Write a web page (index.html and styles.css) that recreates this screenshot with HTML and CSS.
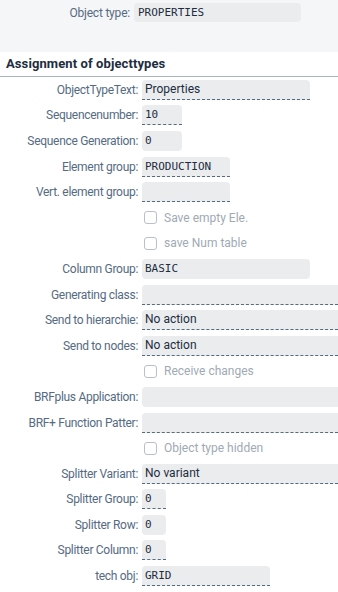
FILE: index.html
```html
<!DOCTYPE html>
<html lang="en">
<head>
    <meta charset="UTF-8">
    <meta name="viewport" content="width=device-width, initial-scale=1.0">
    <title>Object type</title>
    <link rel="stylesheet" href="styles.css">
</head>
<body>
    <div class="page-head">
        <div class="head-row">
            <span class="head-label">Object type:</span>
            <span class="head-field mono">PROPERTIES</span>
        </div>
    </div>

    <div class="section">
        <h2 class="section-title">Assignment of objecttypes</h2>

        <div class="form">
            <div class="row">
                <label class="lbl">ObjectTypeText:</label>
                <span class="field w-l">Properties</span>
            </div>
            <div class="row">
                <label class="lbl">Sequencenumber:</label>
                <span class="field w-s mono">10</span>
            </div>
            <div class="row">
                <label class="lbl">Sequence Generation:</label>
                <span class="field w-s mono plain">0</span>
            </div>
            <div class="row">
                <label class="lbl">Element group:</label>
                <span class="field w-m mono">PRODUCTION</span>
            </div>
            <div class="row">
                <label class="lbl">Vert. element group:</label>
                <span class="field w-m"></span>
            </div>
            <div class="row">
                <span class="lbl"></span>
                <span class="check"><span class="box"></span>Save empty Ele.</span>
            </div>
            <div class="row">
                <span class="lbl"></span>
                <span class="check"><span class="box"></span>save Num table</span>
            </div>
            <div class="row">
                <label class="lbl">Column Group:</label>
                <span class="field w-l mono plain">BASIC</span>
            </div>
            <div class="row">
                <label class="lbl">Generating class:</label>
                <span class="field w-x"></span>
            </div>
            <div class="row">
                <label class="lbl">Send to hierarchie:</label>
                <span class="field w-x">No action</span>
            </div>
            <div class="row">
                <label class="lbl">Send to nodes:</label>
                <span class="field w-x">No action</span>
            </div>
            <div class="row">
                <span class="lbl"></span>
                <span class="check"><span class="box"></span>Receive changes</span>
            </div>
            <div class="row">
                <label class="lbl">BRFplus Application:</label>
                <span class="field w-x plain"></span>
            </div>
            <div class="row">
                <label class="lbl">BRF+ Function Patter:</label>
                <span class="field w-x"></span>
            </div>
            <div class="row">
                <span class="lbl"></span>
                <span class="check"><span class="box"></span>Object type hidden</span>
            </div>
            <div class="row">
                <label class="lbl">Splitter Variant:</label>
                <span class="field w-x">No variant</span>
            </div>
            <div class="row">
                <label class="lbl">Splitter Group:</label>
                <span class="field w-xs mono">0</span>
            </div>
            <div class="row">
                <label class="lbl">Splitter Row:</label>
                <span class="field w-xs mono plain">0</span>
            </div>
            <div class="row">
                <label class="lbl">Splitter Column:</label>
                <span class="field w-xs mono">0</span>
            </div>
            <div class="row">
                <label class="lbl">tech obj:</label>
                <span class="field w-t mono">GRID</span>
            </div>
        </div>
    </div>
</body>
</html>
```

FILE: styles.css
```css
body {
    margin: 0;
    padding: 0;
    font-family: Roboto, Arial, sans-serif;
    font-size: 12px;
    color: #1d2d3e;
    background-color: #fff;
    overflow: hidden;
}

.mono {
    font-family: "DejaVu Sans Mono", "Liberation Mono", monospace;
    font-size: 11px;
    letter-spacing: 0;
}

.page-head {
    background-color: #f5f6f7;
    height: 52px;
    padding-top: 3px;
    box-sizing: border-box;
}

.head-row {
    display: flex;
    align-items: center;
}

.head-label {
    width: 130px;
    text-align: right;
    color: #556b82;
    margin-right: 4px;
    letter-spacing: -0.2px;
}

.head-field {
    width: 167px;
    height: 19px;
    line-height: 19px;
    background-color: #eaecee;
    border-radius: 4px;
    padding-left: 4px;
    box-sizing: border-box;
}

.section-title {
    margin: 0;
    padding: 0 6px;
    height: 24px;
    line-height: 23px;
    font-size: 13px;
    font-weight: bold;
    letter-spacing: 0.1px;
    border-bottom: 1px solid #a9b4be;
}

.row {
    display: flex;
    align-items: center;
    height: 25.6px;
}

.lbl {
    flex: none;
    width: 138px;
    text-align: right;
    color: #556b82;
    margin-right: 4px;
    white-space: nowrap;
    letter-spacing: -0.3px;
}

.field {
    flex: none;
    height: 20px;
    line-height: 19px;
    background-color: #eaecee;
    border-radius: 4px 4px 0 0;
    border-bottom: 1px dashed #556b82;
    padding-left: 3px;
    box-sizing: border-box;
    white-space: nowrap;
}

.field.plain {
    border-bottom-color: transparent;
    border-radius: 4px;
}

.w-xs { width: 24px; }
.w-s { width: 40px; }
.w-m { width: 88px; }
.w-t { width: 128px; }
.w-l { width: 168px; }

.field.w-x {
    flex: 1;
    border-radius: 4px 0 0 0;
}

.field.w-x.plain {
    border-radius: 4px 0 0 4px;
}

.check {
    display: flex;
    align-items: center;
    color: #a0aab4;
}

.box {
    width: 13px;
    height: 13px;
    border: 1px solid #b8c0c8;
    border-radius: 3px;
    box-sizing: border-box;
    margin: 0 7px 0 2px;
    background-color: #fff;
}
```
